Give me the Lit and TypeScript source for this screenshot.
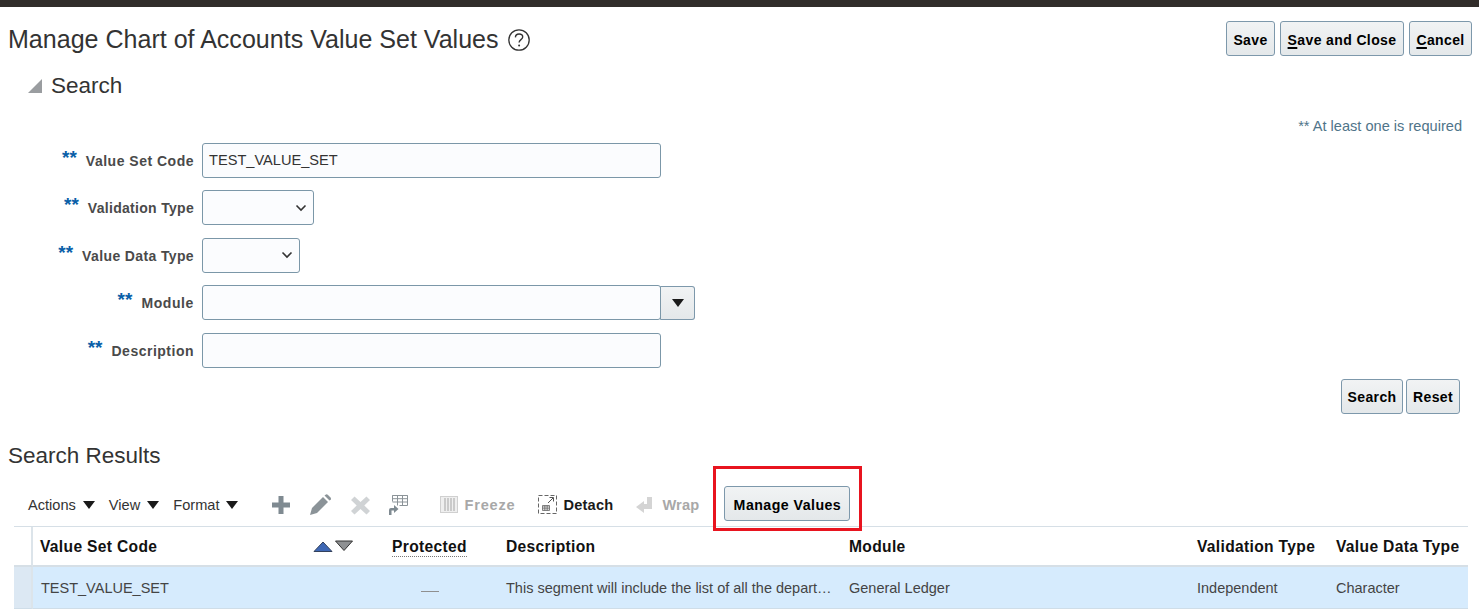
import { LitElement, html, css, svg } from "lit";
import { customElement } from "lit/decorators.js";

const FIELDS = [
  { label: "Value Set Code", kind: "text", value: "TEST_VALUE_SET", ls: 0.5 },
  { label: "Validation Type", kind: "sel1", value: "", ls: 0.3 },
  { label: "Value Data Type", kind: "sel2", value: "", ls: 0.37 },
  { label: "Module", kind: "combo", value: "", ls: 0.6 },
  { label: "Description", kind: "text", value: "", ls: 0.5 },
];

const chevron = html`<svg class="chev" width="12" height="8" viewBox="0 0 12 8"><path d="M1.500 1.500 6 6l4.500-4.500" fill="none" stroke="#333" stroke-width="1.600"/></svg>`;
const down = html`<svg class="down" width="12" height="8" viewBox="0 0 12 8"><path d="M0 0h12L6 8z" fill="#1a1a1a"/></svg>`;

@customElement("app-root")
export class AppRoot extends LitElement {
  static styles = css`
    :host { display: block; width: 1479px; height: 615px; overflow: hidden; background: #fff; font-family: "Liberation Sans", Arial, sans-serif; color: #333; }
    .topbar { height: 7px; background: #312d2a; }
    .head { display: flex; justify-content: space-between; padding: 14px 7px 0 8px; height: 35px; }
    .title { display: flex; align-items: center; gap: 9px; font-size: 25.05px; font-weight: 400; margin: 0; color: #333; height: 37px; }
    .btns { display: flex; gap: 5px; }
    .btn { box-sizing: border-box; height: 35px; border: 1px solid #7d98ab; border-radius: 3px; background: linear-gradient(#f1f3f4, #e4e8ea); font: bold 14px "Liberation Sans", Arial, sans-serif; letter-spacing: 0.38px; color: #000; padding: 2px 0 0; display: flex; align-items: center; justify-content: center; }
    .w49 { width: 49px; } .w124 { width: 124px; } .w63 { width: 63px; } .w62 { width: 62px; } .w54 { width: 54px; }
    .sec { display: flex; align-items: center; gap: 9px; margin: 13px 0 0 28px; height: 34px; font-size: 22.5px; color: #333; }
    .req { text-align: right; padding-right: 17px; margin-top: 13px; height: 20px; line-height: 20px; font-size: 14.6px; color: #4f7489; }
    .form { display: flex; flex-direction: column; gap: 12.5px; margin-top: 6.6px; }
    .row { display: grid; grid-template-columns: 194px auto; column-gap: 8px; align-items: center; justify-content: start; height: 35px; }
    .lab { display: flex; justify-content: flex-end; align-items: center; font-size: 14px; font-weight: bold; color: #4a4a4a; padding-top: 1px; }
    .st { color: #0a5fa8; font-size: 19px; margin-right: 9px; position: relative; top: -3px; letter-spacing: 0; }
    .ctl { display: flex; align-items: flex-end; }
    .inp { box-sizing: border-box; height: 35px; width: 459px; border: 1px solid #7b97a8; border-radius: 3px; background: #fbfcfe; padding: 0 6px; font-size: 14.6px; line-height: 33px; color: #333; }
    .sel { display: flex; align-items: center; justify-content: flex-end; padding-right: 6px; }
    .w112 { width: 112px; } .w98 { width: 98px; }
    .cb { box-sizing: border-box; height: 34px; width: 35px; margin-left: -1px; border: 1px solid #7d98ab; border-left-color: #7b97a8; border-radius: 0 3px 3px 0; background: linear-gradient(#f1f3f4, #e4e8ea); display: flex; align-items: center; justify-content: center; }
    .actions { display: flex; justify-content: flex-end; gap: 3px; padding-right: 19px; margin-top: 11.4px; }
    .actions .btn { padding-top: 1px; }
    .sub { font-size: 22.5px; color: #333; margin: 25px 0 0 8px; height: 34px; line-height: 34px; font-weight: 400; }
    .tb { display: flex; align-items: center; height: 36px; margin: 14px 0 0 14px; font-size: 14.6px; width: 1454px; }
    .menu { display: flex; align-items: center; color: #333; margin-left: 14px; }
    .menu .down { margin-left: 7px; }
    .tool { display: flex; align-items: center; font-weight: bold; letter-spacing: 0.2px; }
    .t1 { margin-left: 32px; letter-spacing: 0.8px; } .t2 { margin-left: 22px; } .t3 { margin-left: 23px; }
    .dis { color: #a8a8a8; }
    .blk { color: #1a1a1a; }
    .mv { position: relative; margin: 0 0 2px 25px; }
    .mv .btn { width: 126px; font-size: 14.2px; letter-spacing: 0.45px; padding-top: 3px; }
    .mark { position: absolute; left: -11px; top: -20px; width: 149px; height: 65px; box-sizing: border-box; border: 3px solid #e8141f; pointer-events: none; z-index: 2; }
    .grid { width: 1454px; margin: 3px 0 0 14px; border-top: 1px solid #d6dfe6; }
    .tr { display: grid; grid-template-columns: 19px 352px 113px 343px 348px 139px 140px; }
    .th { border-bottom: 2px solid #d6dfe6; font-weight: bold; font-size: 15.6px; letter-spacing: 0.33px; color: #111; display: flex; align-items: center; padding: 2px 0 0 8px; box-sizing: border-box; height: 40px; white-space: nowrap; }
    .tr > .th.p7 { padding-left: 7px; }
    .tr > .sq { padding: 0; border-right: 2px solid #dce4ea; }
    .thc { justify-content: space-between; padding-right: 32px; }
    .thc svg { margin-top: -2px; }
    .dot { border-bottom: 1px dotted #777; line-height: 18px; margin-top: 2px; }
    .td { height: 42px; box-sizing: border-box; background: #d6ebfd; border-bottom: 1px solid #cfdde8; font-size: 14.5px; color: #444; display: flex; align-items: center; padding: 1px 0 0 8px; min-width: 0; white-space: nowrap; }
    .tr > .td.sq { background: #dce8f3; padding: 0; }
    .dash { display: block; width: 18px; height: 1px; background: #8f8f8f; margin: 8px 0 0 28px; }
    u { text-decoration-thickness: 2px; text-underline-offset: 2px; }
  `;

  private icon(w: number, ml: number, mr: number, body: unknown) {
    return html`<svg width=${w} height="22" viewBox="0 0 ${w} 22" style="margin-left:${ml}px;margin-right:${mr}px;flex:none">${body}</svg>`;
  }

  render() {
    return html`
      <div class="topbar"></div>
      <header class="head">
        <h1 class="title">Manage Chart of Accounts Value Set Values
          <svg width="22" height="22" viewBox="0 0 22 22"><circle cx="11" cy="11" r="10.200" fill="none" stroke="#333" stroke-width="1.300"/><path d="M7.400 8.400c.1-2.200 1.600-3.400 3.700-3.400 2.100 0 3.600 1.300 3.600 3 0 2.600-3.600 2.700-3.600 5.400" fill="none" stroke="#333" stroke-width="1.400"/><circle cx="11.100" cy="16.400" r="1" fill="#333"/></svg>
        </h1>
        <div class="btns">
          <button class="btn w49">Save</button>
          <button class="btn w124"><u>S</u>ave and Close</button>
          <button class="btn w63"><u>C</u>ancel</button>
        </div>
      </header>
      <div class="sec"><svg width="14" height="14" viewBox="0 0 14 14"><path d="M14 0v14H0z" fill="#9a9da0"/></svg>Search</div>
      <div class="req">** At least one is required</div>
      <div class="form">
        ${FIELDS.map((f) => html`
          <div class="row">
            <div class="lab" style="letter-spacing:${f.ls}px"><span class="st">**</span>${f.label}</div>
            <div class="ctl">
              ${f.kind === "text" ? html`<div class="inp">${f.value}</div>` : ""}
              ${f.kind === "sel1" ? html`<div class="inp sel w112">${chevron}</div>` : ""}
              ${f.kind === "sel2" ? html`<div class="inp sel w98">${chevron}</div>` : ""}
              ${f.kind === "combo" ? html`<div class="inp"></div><div class="cb">${down}</div>` : ""}
            </div>
          </div>`)}
      </div>
      <div class="actions">
        <button class="btn w62">Search</button>
        <button class="btn w54">Reset</button>
      </div>
      <h2 class="sub">Search Results</h2>
      <div class="tb">
        <span class="menu">Actions${down}</span>
        <span class="menu">View${down}</span>
        <span class="menu">Format${down}</span>
        ${this.icon(18, 34, 0, svg`<path d="M6.500 2h5v6.500H18v5h-6.500V20h-5v-6.500H0v-5h6.500z" fill="#7f8a91"/>`)}
        ${this.icon(21, 20, 0, svg`<path d="M0 21l2-7L13 3l5 5L7 19z" fill="#8b9398"/><path d="M14.500 1.500 16 .5q1-.5 2 .5l2.500 2.500q1 1 .5 2L19.500 6.500z" fill="#8b9398"/>`)}
        ${this.icon(19, 20, 0, svg`<path d="M0 6l3.500-3.500L9.500 8l6-5.500L19 6l-5.700 5.500L19 17l-3.500 3.500-6-5.500-6 5.500L0 17l5.700-5.500z" fill="#d0d3d5"/>`)}
        ${this.icon(20, 18, 0, svg`<path d="M4.500 1.500h15v10h-8M4.500 1.500v6M4.500 1.500h15M4.500 4.700h15M4.500 8h15M9.500 1.500v10M14.500 1.500v10" fill="none" stroke="#8b9398" stroke-width="1"/><path d="M1 21v-5q0-2 2-2h3v-3l4.500 4-4.500 4v-2.500H3.500V21z" fill="#7f8a91"/>`)}
        <span class="tool dis t1">
          ${this.icon(18, 0, 6, svg`<rect x=".5" y="2.500" width="17" height="16" fill="#efefef" stroke="#d0d0d0"/><path d="M5 4v13M8 4v13M11 4v13M14 4v13" stroke="#bbb" stroke-width="1.400"/>`)}Freeze</span>
        <span class="tool blk t2">
          ${this.icon(19, 0, 7, svg`<rect x=".5" y="1.500" width="18" height="18" fill="none" stroke="#666" stroke-dasharray="4 2"/><path d="M4.500 11.500h7v5h-7zM4.500 13h7M4.500 14.800h7M6.800 11.500v5M9.200 11.500v5" fill="none" stroke="#666" stroke-width=".8"/><path d="M10 9l5-5M11.500 3.500H15.500V7.500" fill="none" stroke="#555"/>`)}Detach</span>
        <span class="tool dis t3">
          ${this.icon(17, 0, 9, svg`<path d="M11 3h5v12H8v4L0 13l8-6v3h3z" fill="#d4d4d4"/>`)}Wrap</span>
        <div class="mv"><button class="btn">Manage Values</button><span class="mark"></span></div>
      </div>
      <div class="grid">
        <div class="tr">
          <div class="th sq"></div>
          <div class="th thc p7">Value Set Code
            <svg width="40" height="14" viewBox="0 0 40 14"><path d="M1 12.500 10 3l9 9.500z" fill="#3f68b5" stroke="#33415c"/><path d="M22.500 2h17l-8.500 9.500z" fill="#8e9092" stroke="#333"/></svg>
          </div>
          <div class="th p7"><span class="dot">Protected</span></div>
          <div class="th">Description</div>
          <div class="th">Module</div>
          <div class="th">Validation Type</div>
          <div class="th">Value Data Type</div>
        </div>
        <div class="tr">
          <div class="td sq"></div>
          <div class="td">TEST_VALUE_SET</div>
          <div class="td"><span class="dash"></span></div>
          <div class="td">This segment will include the list of all the depart…</div>
          <div class="td">General Ledger</div>
          <div class="td">Independent</div>
          <div class="td">Character</div>
        </div>
      </div>
    `;
  }
}
